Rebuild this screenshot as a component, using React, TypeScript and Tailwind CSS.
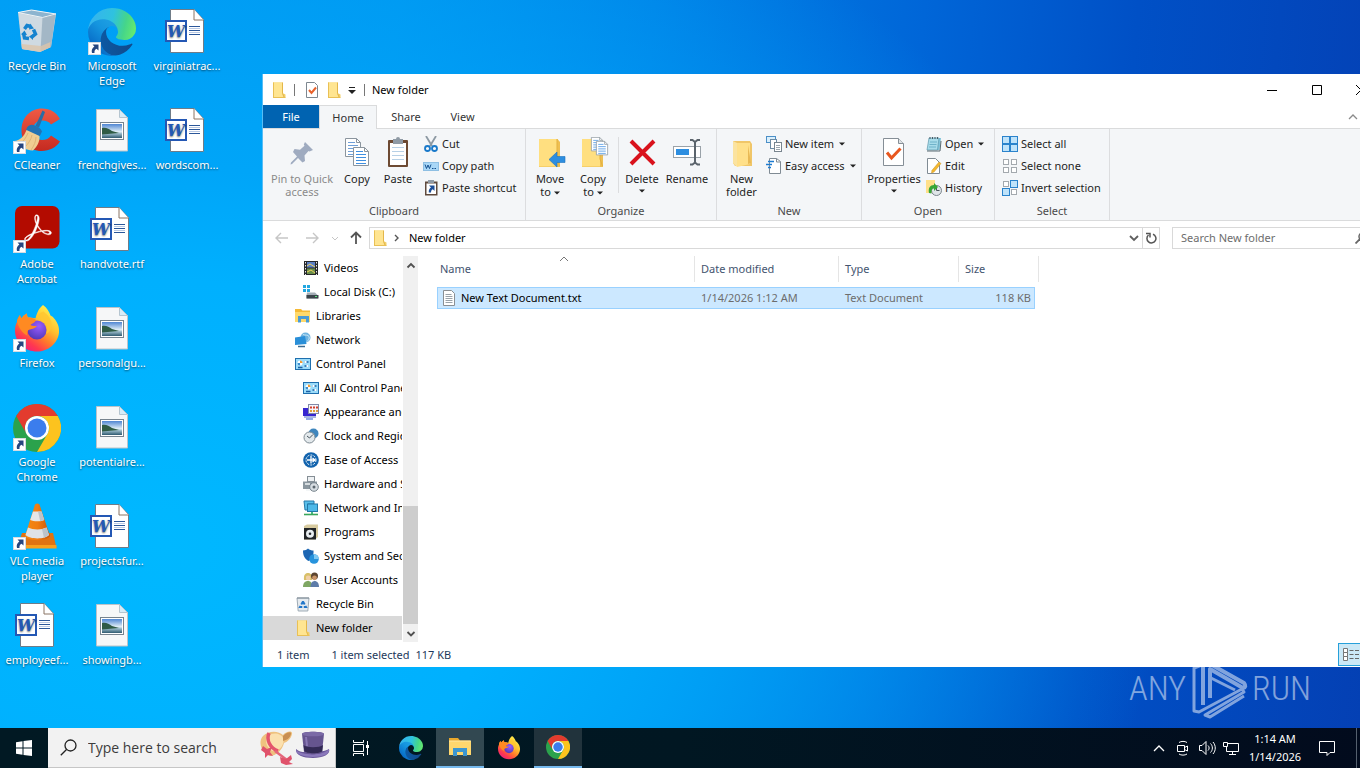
import type { ReactNode } from "react";

/* ---------- desktop icons (48 x 48) ---------- */

function ShortcutMark() {
  return (
    <g>
      <rect x="0.5" y="34.5" width="12" height="12" fill="#fff" stroke="#d5dbe2" />
      <path d="M4.500 36.500h6v6l-2-1.800c-1.800 1-2.200 2.300-2 4.300H4c-.8-3 .2-5 2.400-6.500z" fill="#26457f" />
    </g>
  );
}

function Svg48({ children }: { children: ReactNode }) {
  return (
    <svg viewBox="0 0 48 48" className="size-12" aria-hidden="true">
      {children}
    </svg>
  );
}

function EdgeArt() {
  return (
    <>
      <defs>
        <linearGradient id="edgeA" x1="63" y1="177" x2="241" y2="177" gradientUnits="userSpaceOnUse">
          <stop offset="0" stopColor="#0c59a4" />
          <stop offset="1" stopColor="#114a8b" />
        </linearGradient>
        <linearGradient id="edgeB" x1="157" y1="120" x2="46" y2="240" gradientUnits="userSpaceOnUse">
          <stop offset="0" stopColor="#1b9de2" />
          <stop offset=".3" stopColor="#1595df" />
          <stop offset="1" stopColor="#0667c4" />
        </linearGradient>
        <linearGradient id="edgeC" x1="20" y1="60" x2="260" y2="120" gradientUnits="userSpaceOnUse">
          <stop offset="0" stopColor="#35b4ee" />
          <stop offset=".45" stopColor="#2fc2df" />
          <stop offset=".75" stopColor="#45d58a" />
          <stop offset="1" stopColor="#66eb6e" />
        </linearGradient>
      </defs>
      <g transform="translate(-4.630 -4.920)">
        <path fill="url(#edgeA)" d="M235.680 195.460a93.730 93.730 0 0 1-10.540 4.710 101.870 101.870 0 0 1-35.900 6.460c-47.320 0-88.540-32.550-88.540-74.320A31.480 31.480 0 0 1 117.130 105c-42.800 1.800-53.800 46.400-53.800 72.530 0 73.880 68.090 81.370 82.760 81.370 7.910 0 19.840-2.300 27-4.560l1.310-.44a128.340 128.340 0 0 0 66.600-52.800 4 4 0 0 0-5.320-5.640z" />
        <path fill="url(#edgeB)" d="M110.340 246.340A79.200 79.200 0 0 1 87.600 225a80.720 80.720 0 0 1 29.530-120c3.120-1.470 8.450-4.130 15.540-4a32.350 32.350 0 0 1 25.690 13 31.880 31.880 0 0 1 6.360 18.660c0-.21 24.460-79.600-80-79.600-43.900 0-80 41.660-80 78.210a130.150 130.150 0 0 0 12.110 56 128 128 0 0 0 156.380 67.110 75.550 75.550 0 0 1-62.780-8z" />
        <path fill="url(#edgeC)" d="M156.940 153.780c-.81 1.050-3.300 2.500-3.300 5.660 0 2.610 1.700 5.120 4.720 7.230 14.380 10 41.490 8.680 41.560 8.680a59.560 59.560 0 0 0 30.270-8.350A61.380 61.380 0 0 0 260.620 114c.26-22.410-8-37.310-11.340-43.910C228.090 28.760 182.350 5 132.620 5a128 128 0 0 0-128 126.200c.48-36.540 36.800-66.050 80-66.050 3.500 0 23.460.34 42 10.070 16.340 8.580 24.900 18.940 30.850 29.210 6.180 10.670 7.280 24.150 7.280 29.520s-2.740 13.330-7.800 19.830z" />
      </g>
    </>
  );
}

function ChromeArt() {
  return (
    <>
      <circle cx="24" cy="24" r="24" fill="#2ba24c" />
      <path d="M3.200 12A24 24 0 0 1 44.800 12H24A12 12 0 0 0 13.600 30z" fill="#e33b2e" />
      <path d="M44.800 12A24 24 0 0 1 24 48L34.400 30A12 12 0 0 0 24 12z" fill="#fcc31e" />
      <circle cx="24" cy="24" r="12" fill="#fff" />
      <circle cx="24" cy="24" r="9.500" fill="#3b7ded" />
    </>
  );
}

function FirefoxArt() {
  return (
    <>
      <defs>
        <linearGradient id="ffA" x1="40" y1="4" x2="10" y2="44" gradientUnits="userSpaceOnUse">
          <stop offset="0" stopColor="#fff14f" />
          <stop offset=".35" stopColor="#ffc02e" />
          <stop offset=".6" stopColor="#ff7a2b" />
          <stop offset=".82" stopColor="#ff3850" />
          <stop offset="1" stopColor="#f0207a" />
        </linearGradient>
        <radialGradient id="ffB" cx=".6" cy=".3" r=".8">
          <stop offset="0" stopColor="#9a5cff" />
          <stop offset="1" stopColor="#4a35b0" />
        </radialGradient>
      </defs>
      <path d="M30 0c4 2.500 6.300 7 7.500 10.500 1.200.6 2.300 1 3.200 2.500C44.500 17 46.500 22 46 27.500 45 38.500 35 46.500 24 46.500 12 46.500 2 38 2 25.500c0-3.800.8-6 2-8.500 0-2 1.300-5 3-7 .2 1.500.8 2.500 1.500 3.200C9.700 11.500 11.500 9.600 14 8.500c-.2 1.700.3 3.200 1 4 2.300.1 5 .2 7.500.8 1-3 2-9 7.500-13.300z" fill="url(#ffA)" />
      <circle cx="24" cy="25" r="9.500" fill="url(#ffB)" />
      <path d="M4 17c0-2 1.300-5 3-7 .2 1.500.8 2.500 1.500 3.200C9.700 11.500 11.500 9.600 14 8.500c-.2 1.700.3 3.200 1 4 2.500 0 6 .5 8 2.500-1 3-4 3.500-5.500 5 1.500 1 4.500 1.200 6.500 1-2 2.500-4.500 3-7 3.500-2.700.7-3.800 3-2.500 6C9 28 6 23 4 17z" fill="#ff8a22" />
      <path d="M23.500 13.500C27 12 31 14 33 18c1.500 3.500 1.500 8 0 11 3.500-1.500 5.500-5 5.500-9.500 0-6-4-10-8-13-4 1-5 3.500-7 7z" fill="#ffc531" opacity=".8" />
    </>
  );
}

function RecycleBinArt() {
  return (
    <Svg48>
      <path d="M5 4.500 18.500 2 43 6 38 39 27 44 9 41z" fill="#c9d4dc" />
      <path d="M5 4.500 18.500 2 43 6 29.500 9.500z" fill="#8db4cf" stroke="#eef3f6" />
      <path d="M6 5.500 29 10 27.500 43.500 9 41z" fill="#cfdae2" />
      <path d="M29.500 10 42.500 6.500 38 39 27.500 43.500z" fill="#a3b7c6" />
      <path d="M8.500 36 28 38l9.500-4L37 39.500 27 44 9 41z" fill="#dcc4aa" opacity=".8" />
      <g fill="none" stroke="#1583cf" strokeWidth="3.500">
        <path d="M11.500 21 14 17.500l4 1" />
        <path d="M20.500 21.500 22.500 26l-3.500 3" />
        <path d="M16 30.500 11.500 30 10.500 25" />
      </g>
      <path d="M17 15.500l4 5-5 1zM20 26v6l-4-3.500zM8 26.500l3.500-4 2.500 4.500z" fill="#1583cf" />
    </Svg48>
  );
}

function CCleanerArt() {
  return (
    <Svg48>
      <defs>
        <linearGradient id="ccR" x1="0" y1="0" x2="0" y2="1">
          <stop offset="0" stopColor="#ef5a45" />
          <stop offset="1" stopColor="#c52a20" />
        </linearGradient>
      </defs>
      <path d="M47 12 38 17.500C36 14.500 33 13.500 29.500 13.500 23 13.500 19.500 18.500 19.500 23.500c0 6 4.500 9.500 9.500 9.500 4 0 7-1.500 9-4.500l9 6C43 40.500 36.500 44 28.500 44 16 44 8.500 35 8.500 23.500 8.500 11 17 1.500 29 1.500c8 0 14.500 4 18 10.500z" fill="url(#ccR)" />
      <path d="M29.500 3.500 32 5 26 20.500l-3.500-1.500z" fill="#2a6da5" />
      <path d="M14 20.500c2-3 5-3.500 8-2 3.500 1.500 6 3 7 6l-2.500 5-13.500-6z" fill="#2273b4" />
      <path d="M13.500 23 26.500 29c.5 5.500-2.500 11-6.500 14.500C12 43 4.500 39.500 1 34c6-.5 10-4.500 12.500-11z" fill="#f0cd92" />
      <path d="M15 26c-2 5-5 9-9 11M19 28c-1 5-4 9-7 12M23 30c0 4-2 9-5 13" stroke="#dfb477" fill="none" />
      <ShortcutMark />
    </Svg48>
  );
}

function AcrobatArt() {
  return (
    <Svg48>
      <rect x="2" y="0" width="44.500" height="42.500" rx="7" fill="#b30b00" />
      <g transform="translate(11.500 8.500) scale(1.120)">
        <path stroke="#fff" strokeWidth=".4" fill="#fff" d="M23.630 15.300c-.71-.745-2.166-1.170-4.224-1.170-1.100 0-2.377.106-3.761.354a19.443 19.443 0 0 1-2.307-2.661c-.532-.71-.994-1.490-1.420-2.236.817-2.484 1.207-4.507 1.207-5.962 0-1.632-.603-3.336-2.342-3.336-.532 0-1.065.32-1.349.781-.78 1.384-.425 4.400.923 7.381a60.277 60.277 0 0 1-1.703 4.507c-.568 1.349-1.207 2.733-1.917 4.010C2.834 18.530.314 20.340.03 21.758c-.106.533.071 1.030.462 1.420.142.107.639.533 1.490.533 2.590 0 5.323-4.188 6.707-6.707 1.065-.355 2.130-.71 3.194-.994a34.963 34.963 0 0 1 3.407-.745c2.732 2.448 5.145 2.839 6.352 2.839 1.490 0 2.023-.604 2.200-1.100.32-.64.106-1.349-.213-1.704zm-1.420 1.030c-.107.532-.64.887-1.384.887-.213 0-.39-.036-.604-.071-1.348-.32-2.626-.994-3.903-2.059a17.717 17.717 0 0 1 2.980-.248c.746 0 1.385.035 1.810.142.497.106 1.278.426 1.100 1.348zm-7.524-1.668a38.010 38.010 0 0 0-2.945.674 39.680 39.680 0 0 0-2.520.745 40.050 40.050 0 0 0 1.207-2.555c.426-.994.78-2.023 1.136-2.981.354.603.745 1.207 1.135 1.739a50.127 50.127 0 0 0 1.987 2.378zM10.038 1.460a.768.768 0 0 1 .674-.425c.745 0 .887.851.887 1.526 0 1.135-.355 2.874-.958 4.861-1.030-2.768-1.100-5.074-.603-5.962zM6.134 17.997c-1.810 2.981-3.549 4.826-4.613 4.826a.872.872 0 0 1-.532-.177c-.213-.213-.32-.461-.249-.745.213-1.065 2.271-2.555 5.394-3.904z" />
      </g>
      <ShortcutMark />
    </Svg48>
  );
}

function VlcArt() {
  return (
    <Svg48>
      <defs>
        <linearGradient id="vlcO" x1="0" y1="0" x2="1" y2="0">
          <stop offset="0" stopColor="#f58a12" />
          <stop offset=".5" stopColor="#f07d12" />
          <stop offset="1" stopColor="#c9560a" />
        </linearGradient>
      </defs>
      <path d="M9 30h31l3.500 15H4z" fill="#e07312" />
      <path d="M4 42h39.500v3.500H4z" fill="#f9a01c" />
      <path d="M22 1.500q2.200-2 4.500 0L37 33C34 38.500 15 38.500 12 33z" fill="url(#vlcO)" />
      <path d="M20 8.500h8.500l2.700 8.500c-3 1.700-10.500 1.700-14 0z" fill="#e4e6e8" />
      <path d="M15 24.500c5 2.500 14 2.500 18.500 0l2.500 7.500c-4 4.500-19 4.500-23.500 0z" fill="#dfe2e5" />
      <path d="M25 8.500h3.500l2.700 8.500-4 1.200zM29 26l4.500-1.500L36 32l-5 3z" fill="#bcc3ca" />
      <ShortcutMark />
    </Svg48>
  );
}

function WordDocArt() {
  return (
    <Svg48>
      <path d="M7.500 1.500h23.500l9.500 10v33h-33z" fill="#fff" stroke="#6f7c88" />
      <path d="M31 1.500v10.500h9.500" fill="#fff" stroke="#8a7464" />
      <path d="M26 18.500h11M26 22.500h11M26 26.500h11" stroke="#2b579a" />
      <path d="M26 20.500h11M26 24.500h11" stroke="#b9c9e4" />
      <rect x="3" y="13" width="20" height="20" fill="#fff" stroke="#2458b4" strokeWidth="2" />
      <text x="13" y="28.500" textAnchor="middle" fontSize="16" fontWeight="700" fontStyle="italic" fontFamily="DejaVu Serif, serif" fill="#2458b4">
        W
      </text>
    </Svg48>
  );
}

function PictureFileArt() {
  return (
    <Svg48>
      <defs>
        <linearGradient id="picSky" x1="0" y1="0" x2="0" y2="1">
          <stop offset="0" stopColor="#4f86d3" />
          <stop offset=".55" stopColor="#e0eef6" />
          <stop offset=".68" stopColor="#9cbccb" />
          <stop offset="1" stopColor="#2f5a70" />
        </linearGradient>
      </defs>
      <path d="M8.500 2.500h23l8 8v33.500h-31z" fill="#f6f7f8" stroke="#bcc3c9" />
      <path d="M31.500 2.500v8h8z" fill="#d6ecf8" stroke="#b5c5d0" />
      <rect x="12.500" y="15.500" width="23" height="17" fill="#fff" stroke="#77838e" />
      <rect x="14" y="17" width="20" height="14" fill="url(#picSky)" />
      <path d="M14 21c4-1 7 1 10 3l7 2-17 1.500z" fill="#2f5b45" />
    </Svg48>
  );
}

const desktopItems: { label: string; icon: ReactNode }[] = [
  { label: "Recycle Bin", icon: <RecycleBinArt /> },
  { label: "CCleaner", icon: <CCleanerArt /> },
  { label: "Adobe Acrobat", icon: <AcrobatArt /> },
  { label: "Firefox", icon: <Svg48><FirefoxArt /><ShortcutMark /></Svg48> },
  { label: "Google Chrome", icon: <Svg48><ChromeArt /><ShortcutMark /></Svg48> },
  { label: "VLC media player", icon: <VlcArt /> },
  { label: "employeef...", icon: <WordDocArt /> },
  { label: "Microsoft Edge", icon: <Svg48><g transform="scale(.1875)"><EdgeArt /></g><ShortcutMark /></Svg48> },
  { label: "frenchgives...", icon: <PictureFileArt /> },
  { label: "handvote.rtf", icon: <WordDocArt /> },
  { label: "personalgu...", icon: <PictureFileArt /> },
  { label: "potentialre...", icon: <PictureFileArt /> },
  { label: "projectsfur...", icon: <WordDocArt /> },
  { label: "showingb...", icon: <PictureFileArt /> },
  { label: "virginiatrac...", icon: <WordDocArt /> },
  { label: "wordscom...", icon: <WordDocArt /> },
];

/* ---------- small icons (16 x 16) ---------- */

function Svg16({ children }: { children: ReactNode }) {
  return (
    <svg viewBox="0 0 16 16" className="size-4 shrink-0" aria-hidden="true">
      {children}
    </svg>
  );
}

function FolderArt() {
  return (
    <Svg16>
      <path d="M2 .5h9.500v10.500l3 1.500v3H2z" fill="#f3cf66" />
      <path d="M2 .5h9.500v11l1.500 3.500H2z" fill="#ffe591" />
      <path d="M11.500 .5v11l1.500 3.500" stroke="#e3b64a" fill="none" />
      <path d="M2.500.5v15M2 15.500h12.500" stroke="#e9c055" />
    </Svg16>
  );
}

function CheckDocSmall() {
  return (
    <Svg16>
      <path d="M2.500.5h8l3 3v12h-11z" fill="#fff" stroke="#7d8790" />
      <path d="M5 8l2.500 3L12 5.500" stroke="#e8622c" strokeWidth="2" fill="none" />
    </Svg16>
  );
}

const panelArt = (
  <Svg16>
    <rect x=".5" y="2.500" width="15" height="11" fill="#9bdcfa" stroke="#1f6fae" />
    <circle cx="5" cy="7" r="2.500" fill="#fff" />
    <path d="M5 7V4.500A2.500 2.500 0 0 1 7.500 7z" fill="#f29a2e" />
    <path d="M2.500 7A2.500 2.500 0 0 0 5 9.500V7z" fill="#3b8fd0" />
    <path d="M3 11.500h4.500M9.500 6h4M9.500 10h4" stroke="#1b5fa5" strokeWidth="1.500" />
    <rect x="9.500" y="5" width="2" height="2" fill="#fff" />
    <rect x="11.500" y="9" width="2" height="2" fill="#fff" />
  </Svg16>
);

const treeItems: { label: string; deep: boolean; icon: ReactNode; active?: boolean }[] = [
  {
    label: "Videos", deep: true,
    icon: (
      <Svg16>
        <rect x="1" y="1" width="14" height="14" fill="#26282b" />
        <rect x="4" y="2" width="8" height="5.500" fill="#5b7fc4" />
        <rect x="4" y="8.500" width="8" height="5.500" fill="#6a8f4b" />
        <path d="M4 6l3-2 5 3M4 12l4-2 4 3" stroke="#f0d25c" fill="none" />
        <path d="M2.500 2v13M13.500 2v13" stroke="#e8e8e8" strokeDasharray="1.500 1.500" />
      </Svg16>
    ),
  },
  {
    label: "Local Disk (C:)", deep: true,
    icon: (
      <Svg16>
        <path d="M0 1h3v3H0zM4 1h3v3H4zM0 5h3v3H0zM4 5h3v3H4z" fill="#22a7e0" />
        <path d="M4 8.500h8l3 3v3H3.500v-3z" fill="#a3adb5" />
        <path d="M3.500 11h12v3.500h-12z" fill="#3b444b" />
        <path d="M12 12.500h2" stroke="#5be07b" />
      </Svg16>
    ),
  },
  {
    label: "Libraries", deep: false,
    icon: (
      <Svg16>
        <path d="M0 1h6l1.500 1.500H15V14H0z" fill="#f5b935" />
        <path d="M0 4h15V14H0z" fill="#ffd96a" />
        <path d="M3 8h11v6.500h-3V11H6v3.500H3z" fill="#4a9bd4" />
      </Svg16>
    ),
  },
  {
    label: "Network", deep: false,
    icon: (
      <Svg16>
        <circle cx="10.500" cy="5.500" r="5" fill="#6fb3df" />
        <path d="M8 2.500c2 1 5 0 6 2s-1 4-2 5" stroke="#c9e7f7" fill="none" />
        <path d="M0 5.500l10-1.500 1.500 8L0 13z" fill="#2a8fd8" />
        <path d="M3 14.500h7" stroke="#3c6c92" strokeWidth="1.500" />
      </Svg16>
    ),
  },
  { label: "Control Panel", deep: false, icon: panelArt },
  { label: "All Control Panel Items", deep: true, icon: panelArt },
  {
    label: "Appearance and Personalization", deep: true,
    icon: (
      <Svg16>
        <rect x="0" y="4" width="13" height="8" fill="#3726d0" />
        <path d="M3 15h7" stroke="#6f8fe0" strokeWidth="1.500" />
        <rect x="5.500" y=".5" width="10" height="9" fill="#f4f4fb" stroke="#8289a8" />
        <path d="M7 3.500h2M10 3.500h2M13 3.500h2" stroke="#d2402c" strokeWidth="2" />
        <path d="M7 7h2M10 7h2M13 7h2" stroke="#e0a13a" strokeWidth="2" />
        <path d="M1 13h12" stroke="#8d9fd8" strokeWidth="1.500" />
      </Svg16>
    ),
  },
  {
    label: "Clock and Region", deep: true,
    icon: (
      <Svg16>
        <circle cx="10.500" cy="5.500" r="5" fill="#3f86bd" />
        <circle cx="6.500" cy="9.500" r="5.500" fill="#e3e9ec" stroke="#7f8b93" />
        <path d="M4 8l2.500 2L10 6.500" stroke="#47545e" fill="none" />
      </Svg16>
    ),
  },
  {
    label: "Ease of Access", deep: true,
    icon: (
      <Svg16>
        <circle cx="8" cy="8" r="7.800" fill="#1364ae" />
        <circle cx="8" cy="8" r="5" fill="none" stroke="#fff" strokeDasharray="2 1.200" />
        <path d="M4 8h7.500M8 4v7.500M9.500 6l2.500 2-2.500 2" stroke="#fff" strokeWidth="1.300" fill="none" />
      </Svg16>
    ),
  },
  {
    label: "Hardware and Sound", deep: true,
    icon: (
      <Svg16>
        <rect x="4.500" y=".5" width="7" height="5" fill="#eef1f3" stroke="#858e95" />
        <path d="M0 5.500h14V13H0z" fill="#8b979f" />
        <path d="M2 8h5M3 14h5" stroke="#f0f3f5" strokeWidth="1.500" />
        <circle cx="11" cy="11" r="4.300" fill="#d7dde2" stroke="#76828b" />
        <circle cx="11" cy="11" r="1.500" fill="#5d6870" />
      </Svg16>
    ),
  },
  {
    label: "Network and Internet", deep: true,
    icon: (
      <Svg16>
        <path d="M1 1h10v3H5v6H2z" fill="#58bfea" stroke="#277bab" />
        <rect x="4.500" y="4" width="10" height="7.500" fill="#4db8e8" stroke="#2377a8" />
        <path d="M9 12v2" stroke="#4b8" strokeWidth="2" />
        <path d="M1 14.500h14" stroke="#3aa65a" strokeWidth="1.600" />
      </Svg16>
    ),
  },
  {
    label: "Programs", deep: true,
    icon: (
      <Svg16>
        <path d="M1 2l3-1.500h11V13l-3 2.500H1z" fill="#d8cba0" />
        <rect x="1" y="4" width="12" height="11.500" fill="#202326" />
        <circle cx="7" cy="9.800" r="4" fill="#e9eef1" />
        <circle cx="7" cy="9.800" r="1.300" fill="#26292c" />
      </Svg16>
    ),
  },
  {
    label: "System and Security", deep: true,
    icon: (
      <Svg16>
        <path d="M0 2.500c2 0 4-1 5-2 1.500 1.500 3.500 2 5.500 2C11 8 8 12 5.500 13 2 11 0 8 0 2.500z" fill="#1c66b3" />
        <circle cx="11" cy="11" r="4.800" fill="#2793dc" />
        <path d="M11 11V6.200A4.800 4.800 0 0 1 15.800 11z" fill="#7fc9f3" />
      </Svg16>
    ),
  },
  {
    label: "User Accounts", deep: true,
    icon: (
      <Svg16>
        <path d="M1 8c-.5-5 1-7 4-7s4.500 2 4 7z" fill="#d9c069" />
        <circle cx="5.200" cy="6" r="2.400" fill="#f1cfa8" />
        <path d="M0 15c0-4 2-6 5-6s4 2 4 6z" fill="#7fa763" />
        <circle cx="11.500" cy="4" r="3.500" fill="#5b4430" />
        <circle cx="11.500" cy="5.800" r="2.400" fill="#c99468" />
        <path d="M7.500 15c0-4 1.500-6 4-6s4.500 2 4.500 6z" fill="#5d7ba8" />
      </Svg16>
    ),
  },
  {
    label: "Recycle Bin", deep: false,
    icon: (
      <Svg16>
        <path d="M2 2h12l-1.200 13H3.200z" fill="#e6ebef" stroke="#9fabb5" />
        <path d="M2 2h12" stroke="#7c8993" />
        <path d="M8 5.500l3 5.500H5z" fill="none" stroke="#2477c9" strokeWidth="2" strokeDasharray="3.500 1.500" />
      </Svg16>
    ),
  },
  { label: "New folder", deep: false, icon: <FolderArt />, active: true },
];

/* ---------- ribbon pieces ---------- */

function Caret() {
  return <svg viewBox="0 0 6 4" className="inline-block h-1 w-1.5 shrink-0 align-middle" aria-hidden="true"><path d="M0 .5h6L3 3.500z" fill="#222" /></svg>;
}

function BigButton({ icon, lines, caret, width, muted }: { icon: ReactNode; lines: string[]; caret?: "inline" | "below"; width: string; muted?: boolean }) {
  return (
    <button className={`flex shrink-0 flex-col items-center pt-2 ${width} ${muted ? "text-[#8a8a8a]" : "text-[#1e1e1e]"}`}>
      <svg viewBox="0 0 32 32" className="size-8 shrink-0" aria-hidden="true">{icon}</svg>
      <span className="mt-[3px] block whitespace-nowrap text-center leading-[13px]">
        {lines.map((line, i) => (
          <span key={line} className="block">
            {line}
            {caret === "inline" && i === lines.length - 1 && <> <Caret /></>}
          </span>
        ))}
        {caret === "below" && <span className="flex h-2 items-end justify-center"><Caret /></span>}
      </span>
    </button>
  );
}

function SmallButton({ icon, label, caret }: { icon: ReactNode; label: string; caret?: boolean }) {
  return (
    <button className="flex h-[22px] items-center gap-[3px] whitespace-nowrap text-[#1e1e1e]">
      <Svg16>{icon}</Svg16>
      <span>{label}</span>
      {caret && <span className="ml-0.5 flex"><Caret /></span>}
    </button>
  );
}

function Group({ title, width, children }: { title: string; width: string; children: ReactNode }) {
  return (
    <section aria-label={title} className={`flex shrink-0 flex-col border-r border-[#dcdddf] ${width}`}>
      <div className="flex h-[73px] items-start">{children}</div>
      <div className="text-center leading-[18px] text-[#4a4a4a]">{title}</div>
    </section>
  );
}

const pinIcon = (
  <path d="M19 4l8 8-3.500 1.500-1-.5-4 4.500.5 5.500-2.500 1.500-4.500-4.500-6 6-1.500.5.5-2 6-6-4-4.500L8.500 11l5.500.8 4.500-4-.7-1.300z" transform="translate(0 1)" fill="#9fabc0" />
);

function Sheet({ x, y, color }: { x: number; y: number; color: string }) {
  return (
    <g transform={`translate(${x} ${y})`}>
      <path d="M.5.5h11l4 4v14h-15z" fill="#fff" stroke="#8b959e" />
      <path d="M11.500.5v4h4" fill="none" stroke="#8b959e" />
      <path d="M3 4.500h7M3 7.500h10M3 10.500h10M3 13.500h10M3 16.500h10" stroke={color} />
    </g>
  );
}

const copyIcon = (
  <>
    <Sheet x={4} y={1} color="#6f9fd8" />
    <Sheet x={12} y={10} color="#3f8fe0" />
  </>
);

const pasteIcon = (
  <>
    <rect x="6" y="3" width="20" height="27" rx="1" fill="#6d4a33" />
    <rect x="8" y="6" width="16" height="22" fill="#fff" />
    <path d="M10 10.500h12M10 14.500h12M10 18.500h12M10 22.500h12" stroke="#b7d0e6" />
    <path d="M11 2h3a2 2 0 0 1 4 0h3v5H11z" fill="#8f9aa5" />
  </>
);

const bigFolder = (
  <>
    <path d="M5 2h18.500l2.500 3v25H5z" fill="#eebf52" />
    <path d="M5 2h18v27.500H5z" fill="#ffdf80" />
    <path d="M23 2v20l2.500 7" stroke="#e3b13f" fill="none" />
  </>
);

const moveIcon = (
  <>
    {bigFolder}
    <path d="M31 19.500v6h-8v4.500L15 22.500l8-7.500v4.500z" fill="#2d8ee0" stroke="#1b72bd" strokeWidth=".6" />
  </>
);

const copyToIcon = (
  <>
    {bigFolder}
    <g transform="translate(14 0) scale(.75)"><Sheet x={0} y={0} color="#3f8fe0" /></g>
    <g transform="translate(19 4) scale(.75)"><Sheet x={0} y={0} color="#3f8fe0" /></g>
  </>
);

const deleteIcon = <path d="M5 4l23 23M28 4L5 27" stroke="#d9121c" strokeWidth="4" />;

const renameIcon = (
  <>
    <rect x="2.500" y="9.500" width="27" height="11" fill="#fff" stroke="#9aa2a9" />
    <rect x="5" y="12" width="13" height="6" fill="#2d8ee0" />
    <path d="M19 3h2.500L24 5l2.500-2H29M19 27.500h2.500l2.500-2 2.500 2H29M24 5v21" stroke="#5b646c" strokeWidth="2" fill="none" />
  </>
);

const newFolderIcon = (
  <>
    <path d="M7 4h17l2 3v22H9l-2-3z" fill="#f0c669" />
    <path d="M7 4l4 2v24l-4-4z" fill="#fbe3a0" />
    <path d="M11 6h13v21l-13 3z" fill="#ffe08a" />
    <path d="M22 8l3 18-3 1z" fill="#e9b955" />
  </>
);

const propertiesIcon = (
  <>
    <path d="M5.500 1.500h15l5 5v22h-20z" fill="#fff" stroke="#858e96" />
    <path d="M20.500 1.500v5h5" fill="#dfe3e6" stroke="#858e96" />
    <path d="M9 15.500l4.500 5.500 9-9.500" stroke="#e8571f" strokeWidth="3" fill="none" />
  </>
);

const cutIcon = (
  <>
    <path d="M3 0l6 10M13 0L7 10" stroke="#8d99a3" strokeWidth="1.800" />
    <circle cx="4.500" cy="12.500" r="2.500" fill="none" stroke="#1979ca" strokeWidth="1.800" />
    <circle cx="11.500" cy="12.500" r="2.500" fill="none" stroke="#1979ca" strokeWidth="1.800" />
  </>
);

const copyPathIcon = (
  <>
    <rect x=".5" y="4.500" width="15" height="8" fill="#a9d7f7" stroke="#8ebfe3" />
    <path d="M2 6.500l1.500 4L5 7l1.500 3.500L8 6.500M9 10.500h1.500M11.500 10.500H13" stroke="#14508f" fill="none" />
  </>
);

const pasteShortcutIcon = (
  <>
    <rect x="2" y="1.500" width="12.500" height="14" fill="#5f4a3d" />
    <rect x="3.500" y="3.500" width="9.500" height="10.500" fill="#fff" />
    <rect x="5" y="0" width="6" height="3" fill="#8f9aa5" />
    <path d="M6 5.500h5.500V11L9.800 9.300C8.500 10 8 11 8 12.500H5.800c-.3-2.500.7-4 2.200-5z" fill="#1d4f98" />
  </>
);

const newItemIcon = (
  <>
    <rect x=".5" y=".5" width="9" height="6" fill="#d9effc" stroke="#4b8fc7" />
    <rect x="4.500" y="3.500" width="6" height="9" fill="#fff" stroke="#6d8ba3" />
    <rect x="8.500" y="6.500" width="7" height="9" fill="#fff" stroke="#79858f" />
    <path d="M10 9.500h4M10 11.500h4M10 13.500h4" stroke="#9ba6ae" />
  </>
);

const easyIcon = (
  <>
    <path d="M3.500.5h7l4 3v12h-11z" fill="#fff" stroke="#808b94" />
    <path d="M10.500.5v3.500h4" fill="none" stroke="#808b94" />
    <path d="M2 3.500h6M0 6.500h6M2 9.500h3" stroke="#1d7bd0" strokeWidth="1.500" />
  </>
);

const openIcon = (
  <>
    <path d="M4 2h11l-1.500 12H2z" fill="#7fc3d9" />
    <path d="M3 2h10l-1.500 12H1z" fill="#a8dcea" stroke="#5b97ab" strokeWidth=".7" />
    <path d="M4 1v2M6.500 1v2M9 1v2M11.500 1v2" stroke="#4a5c66" />
    <path d="M4 6h7M3.500 8.500h7M3 11h7" stroke="#6fb2c9" />
    <path d="M1 15h13l1-10" fill="none" stroke="#5a6a72" />
  </>
);

const editIcon = (
  <>
    <path d="M1.500.5h8l4 4v11h-12z" fill="#fff" stroke="#808b94" />
    <path d="M13 4l2 1.500L8 14l-2.500 1 .5-2.700z" fill="#f4b82f" stroke="#c99222" strokeWidth=".5" />
  </>
);

const historyIcon = (
  <>
    <path d="M0 0h9v13H0z" fill="#ffe08a" />
    <circle cx="10.500" cy="10.500" r="5" fill="#dfe4e8" stroke="#7a858d" />
    <path d="M10.500 7.500v3h3" stroke="#4b555d" fill="none" />
    <path d="M3 13c-1-5 1-8 5-8V3l4 4-4 4V8.500c-2 0-3 2-2.500 5z" fill="#37a637" />
  </>
);

function Cells({ on }: { on: boolean[] }) {
  const spots = [[0.5, 0.5], [8.5, 0.5], [0.5, 8.500], [8.5, 8.500]];
  return (
    <>
      {spots.map(([x, y], i) =>
        on[i] ? (
          <rect key={i} x={x} y={y} width="7" height="7" fill="#bfe3fa" stroke="#2a83cc" />
        ) : (
          <rect key={i} x={x + 1} y={y + 1} width="5" height="5" fill="#fff" stroke="#a3a9ae" />
        ),
      )}
    </>
  );
}

/* ---------- explorer window ---------- */

function Ribbon() {
  return (
    <div className="flex h-[93px] shrink-0 border-y border-[#dadbdc] bg-[#f4f6f8]">
      <Group title="Clipboard" width="w-[263px]">
        <BigButton icon={pinIcon} lines={["Pin to Quick", "access"]} width="w-[78px]" muted />
        <BigButton icon={copyIcon} lines={["Copy"]} width="w-[32px]" />
        <BigButton icon={pasteIcon} lines={["Paste"]} width="w-[50px]" />
        <div className="flex flex-col pt-1">
          <SmallButton icon={cutIcon} label="Cut" />
          <SmallButton icon={copyPathIcon} label="Copy path" />
          <SmallButton icon={pasteShortcutIcon} label="Paste shortcut" />
        </div>
      </Group>
      <Group title="Organize" width="w-[191px]">
        <BigButton icon={moveIcon} lines={["Move", "to"]} caret="inline" width="w-[48px]" />
        <BigButton icon={copyToIcon} lines={["Copy", "to"]} caret="inline" width="w-[38px]" />
        <div className="ml-1.5 mt-2 h-14 border-l border-[#dcdddf]" />
        <BigButton icon={deleteIcon} lines={["Delete"]} caret="below" width="w-[46px]" />
        <BigButton icon={renameIcon} lines={["Rename"]} width="w-[44px]" />
      </Group>
      <Group title="New" width="w-[145px]">
        <BigButton icon={newFolderIcon} lines={["New", "folder"]} width="w-[49px]" />
        <div className="flex flex-col pt-1">
          <SmallButton icon={newItemIcon} label="New item" caret />
          <SmallButton icon={easyIcon} label="Easy access" caret />
        </div>
      </Group>
      <Group title="Open" width="w-[133px]">
        <BigButton icon={propertiesIcon} lines={["Properties"]} caret="below" width="w-[64px]" />
        <div className="flex flex-col pt-1">
          <SmallButton icon={openIcon} label="Open" caret />
          <SmallButton icon={editIcon} label="Edit" />
          <SmallButton icon={historyIcon} label="History" />
        </div>
      </Group>
      <Group title="Select" width="w-[115px]">
        <div className="flex flex-col pl-[7px] pt-1">
          <SmallButton icon={<Cells on={[true, true, true, true]} />} label="Select all" />
          <SmallButton icon={<Cells on={[false, false, false, false]} />} label="Select none" />
          <SmallButton icon={<Cells on={[false, true, true, false]} />} label="Invert selection" />
        </div>
      </Group>
    </div>
  );
}

function AddressRow() {
  return (
    <div className="flex shrink-0 items-center pt-[6px]">
      <div className="flex w-[106px] items-center pl-[11px]">
        <button aria-label="Back" className="w-[30px]"><Svg16><path d="M2 8h12M7 3L2 8l5 5" stroke="#c6c6c6" strokeWidth="1.400" fill="none" /></Svg16></button>
        <button aria-label="Forward" className="w-[27px]"><Svg16><path d="M2 8h12M9 3l5 5-5 5" stroke="#c6c6c6" strokeWidth="1.400" fill="none" /></Svg16></button>
        <button aria-label="Recent locations" className="w-[17px]"><svg viewBox="0 0 8 16" className="h-4 w-2"><path d="M1 7l3 3 3-3" stroke="#c6c6c6" fill="none" /></svg></button>
        <button aria-label="Up"><Svg16><path d="M8 14V3M3 7.500l5-5 5 5" stroke="#555" strokeWidth="1.800" fill="none" /></Svg16></button>
      </div>
      <div className="flex h-[22px] flex-1 items-center border border-[#d9d9d9]">
        <span className="flex px-0.5"><FolderArt /></span>
        <svg viewBox="0 0 8 8" className="ml-[3px] size-2"><path d="M2 1l3 3-3 3" stroke="#555" strokeWidth="1.400" fill="none" /></svg>
        <span className="flex-1 pl-2">New folder</span>
        <button aria-label="Previous locations" className="flex w-4 justify-center"><svg viewBox="0 0 10 8" className="h-2 w-2.5"><path d="M1 2l4 4 4-4" stroke="#5f5f5f" strokeWidth="1.800" fill="none" /></svg></button>
        <button aria-label="Refresh" className="flex h-full w-[17px] items-center justify-center border-l border-[#d9d9d9]">
          <svg viewBox="0 0 12 12" className="size-3"><path d="M8 2.200A4.500 4.500 0 1 1 3.500 3M1 1.500h4v4" stroke="#555" strokeWidth="1.500" fill="none" /></svg>
        </button>
      </div>
      <label className="ml-3 flex h-[22px] w-[204px] items-center border border-[#d9d9d9] pl-2">
        <input aria-label="Search New folder" placeholder="Search New folder" className="min-w-0 flex-1 bg-transparent outline-none placeholder:text-[#6d6d6d]" />
        <svg viewBox="0 0 12 12" className="mr-2 size-3"><circle cx="7.500" cy="4.500" r="3.500" stroke="#666" strokeWidth="1.500" fill="none" /><path d="M5 7l-4.500 4.500" stroke="#666" strokeWidth="1.800" /></svg>
      </label>
    </div>
  );
}

function Sidebar() {
  return (
    <div className="flex w-[156px] shrink-0">
      <nav aria-label="Folders" className="flex w-[139px] flex-col overflow-hidden">
        {treeItems.map((item) => (
          <a
            key={item.label + String(item.deep)}
            href="#"
            className={`flex h-6 shrink-0 items-center gap-[5px] whitespace-nowrap ${item.deep ? "pl-10" : "pl-8"} ${item.active ? "bg-[#d9d9d9]" : ""}`}
          >
            {item.icon}
            {item.label}
          </a>
        ))}
      </nav>
      <div aria-hidden="true" className="ml-px flex w-[15px] flex-col items-center bg-[#f0f0f0]">
        <svg viewBox="0 0 10 18" className="h-[18px] w-2.5"><path d="M1.500 11.500L5 8l3.500 3.500" stroke="#505050" strokeWidth="1.800" fill="none" /></svg>
        <div className="mt-auto h-[118px] w-full bg-[#cdcdcd]" />
        <svg viewBox="0 0 10 18" className="h-[18px] w-2.5"><path d="M1.500 8L5 11.500 8.500 8" stroke="#505050" strokeWidth="1.800" fill="none" /></svg>
      </div>
    </div>
  );
}

function FileList() {
  return (
    <div className="relative flex-1 pl-[18px]">
      <svg viewBox="0 0 10 6" className="absolute left-[140px] top-0 h-1.5 w-2.5"><path d="M1 5l4-4 4 4" stroke="#777" fill="none" /></svg>
      <table className="w-[602px] table-fixed border-separate border-spacing-0">
        <colgroup>
          <col className="w-[258px]" />
          <col className="w-[144px]" />
          <col className="w-[120px]" />
          <col className="w-[76px]" />
          <col className="w-[4px]" />
        </colgroup>
        <thead>
          <tr className="h-[26px] text-left text-[#44546f]">
            <th className="border-r border-[#e5e5e5] pl-[3px] font-normal">Name</th>
            <th className="border-r border-[#e5e5e5] pl-[6px] font-normal">Date modified</th>
            <th className="border-r border-[#e5e5e5] pl-[6px] font-normal">Type</th>
            <th colSpan={2} className="border-r border-[#e5e5e5] pl-[6px] font-normal">Size</th>
          </tr>
        </thead>
        <tbody>
          <tr aria-hidden="true" className="h-[5px]"><td colSpan={5} /></tr>
          <tr className="h-[22px] text-[#6d6d6d]">
            <td className="border-y border-l border-[#99d1ff] bg-[#cce8ff] pl-[3px]">
              <span className="flex items-center gap-1 text-black">
                <Svg16>
                  <path d="M2.500.5h8l3 3v12h-11z" fill="#fff" stroke="#8b8f93" />
                  <path d="M4.500 4.500h6M4.500 6.500h7M4.500 8.500h7M4.500 10.500h7M4.500 12.500h7" stroke="#9aa2a9" />
                </Svg16>
                New Text Document.txt
              </span>
            </td>
            <td className="border-y border-[#99d1ff] bg-[#cce8ff] pl-[6px]">1/14/2026 1:12 AM</td>
            <td className="border-y border-[#99d1ff] bg-[#cce8ff] pl-[6px]">Text Document</td>
            <td className="border-y border-r border-[#99d1ff] bg-[#cce8ff] pr-[3px] text-right">118 KB</td>
            <td />
          </tr>
        </tbody>
      </table>
    </div>
  );
}

function ExplorerWindow() {
  return (
    <section aria-label="New folder" className="absolute -right-4 bottom-[61px] left-[262px] top-[74px] flex flex-col border-l border-[#56bdf5] bg-white text-[11px] leading-4 text-black">
      <header className="flex h-[31px] shrink-0 items-center pl-2">
        <FolderArt />
        <span className="mx-[7px] h-3 border-l border-[#777]" />
        <span className="ml-0.5 flex items-center gap-1.5"><CheckDocSmall /><FolderArt /></span>
        <svg viewBox="0 0 8 10" className="ml-1.5 h-2.5 w-2"><path d="M1 2.500h6" stroke="#222" /><path d="M0 5h8L4 9z" fill="#222" /></svg>
        <span className="ml-2 mr-[7px] h-3 border-l border-[#777]" />
        <h1>New folder</h1>
        <div className="ml-auto flex">
          <button aria-label="Minimize" className="flex w-[45px] justify-center"><svg viewBox="0 0 10 10" className="size-2.5"><path d="M0 5.500h10" stroke="#000" /></svg></button>
          <button aria-label="Maximize" className="flex w-[45px] justify-center"><svg viewBox="0 0 10 10" className="size-2.5"><path d="M.5.5h9v9h-9z" stroke="#000" fill="none" /></svg></button>
          <button aria-label="Close" className="flex w-[37px] justify-center"><svg viewBox="0 0 10 10" className="ml-1.5 size-2.5"><path d="M0 0l10 10M10 0L0 10" stroke="#000" /></svg></button>
        </div>
      </header>
      <div className="-mb-px flex h-6 shrink-0 items-stretch text-[#333]">
        <button className="w-14 bg-[#0063b1] text-white">File</button>
        <button className="relative w-[58px] border-x border-t border-[#dadbdc] bg-[#f4f6f8]">Home</button>
        <button className="w-[58px]">Share</button>
        <button className="w-[55px]">View</button>
        <button aria-label="Collapse ribbon" className="ml-auto mr-[18px] flex items-center"><svg viewBox="0 0 10 6" className="h-1.5 w-2.5"><path d="M1 5l4-4 4 4" stroke="#8a8a8a" strokeWidth="1.300" fill="none" /></svg></button>
      </div>
      <Ribbon />
      <AddressRow />
      <div className="flex min-h-0 flex-1 pt-[7px]">
        <Sidebar />
        <FileList />
      </div>
      <footer className="flex h-[25px] shrink-0 items-center pl-3.5 text-[#1e395b]">
        <span>1 item</span>
        <span className="ml-[22px]">1 item selected</span>
        <span className="ml-1.5">117 KB</span>
        <button aria-label="Details view" className="ml-auto mr-2 flex h-[23px] w-[30px] items-center border border-[#26a0da] bg-[#cbe8f6] pl-1">
          <svg viewBox="0 0 18 14" className="h-3.5 w-[18px]">
            <path d="M.5.5h4v4h-4zM.5 4.500h4v4h-4zM.5 8.500h4v4h-4z" fill="#fff" stroke="#777" />
            <path d="M6.500 2.500h4M6.500 6.500h4M6.500 10.500h4M12 2.500h4M12 6.500h4M12 10.500h4" stroke="#666" />
          </svg>
        </button>
      </footer>
    </section>
  );
}

/* ---------- watermark ---------- */

function Watermark() {
  return (
    <div className="absolute bottom-2 right-[49px] flex items-center font-['Roboto_Condensed','Open_Sans_Condensed','Noto_Sans_ExtraCondensed',Roboto,sans-serif] text-[34px] font-light leading-none text-white opacity-50">
      <span>ANY</span>
      <svg viewBox="0 0 58 64" className="mx-1 h-16 w-[58px]" fill="none" stroke="#fff" strokeWidth="4" strokeLinejoin="round" aria-hidden="true">
        <path d="M13 49V4L54 27q3 4-1 5L20 13v29" />
        <path d="M12 9L4 12v43l5 1L52 33l2 3-39 23 5 2 34-21" strokeWidth="3" />
        <path d="M21 22l24 12" strokeWidth="3" />
      </svg>
      <span>RUN</span>
    </div>
  );
}

/* ---------- taskbar ---------- */

function HatsArt() {
  return (
    <svg viewBox="0 0 72 36" className="h-9 w-[72px]" aria-hidden="true">
      <path d="M4 6C10 0 20 1 24 5c3-4 10-5 9-1-1 5-5 8-8 9-2 8-8 12-13 13C6 26-3 14 4 6z" fill="#efc27f" />
      <path d="M9 6c5-4 13-3 15 2s-2 12-8 13S4 12 9 6z" fill="#fbe0ae" />
      <path d="M24 6c3-4 9-5 8-2-1 4-4 6-8 7z" fill="#c98f52" />
      <path d="M10 3c-3 7 1 15 9 18" stroke="#e4556c" strokeWidth="3.500" fill="none" />
      <path d="M4 16l4 3 5-2-2 5 3 4-5-1-3 3v-5l-4-3z" fill="#e0526b" />
      <path d="M16 21l12 9" stroke="#e4667b" strokeWidth="2.500" />
      <path d="M21 27l6 2 5-4 1 4-3 3 4 2-7 1-5-2z" fill="#e0526b" />
      <path d="M37 19c4 4 8 3 17 3s14-2 16-3c2 5-6 9-16 9s-18-3-17-9z" fill="#6b599b" />
      <path d="M37 20c6 6 28 6 33-1 1 5-6 8-16 8s-17-3-17-7z" fill="#8b79bb" />
      <path d="M43 4c0-3 22-3 22 0l-2 18c-2 3-16 3-18 0z" fill="#66558f" />
      <path d="M44.500 15c3 3 16 3 19.500 0l-.7 6c-2 3-16 3-18 0z" fill="#332a55" />
      <ellipse cx="54" cy="4" rx="11" ry="2.300" fill="#7b6aa6" />
      <path d="M47 7l1 9" stroke="#8978b5" strokeWidth="2" />
    </svg>
  );
}

function Taskbar() {
  return (
    <footer className="flex h-10 shrink-0 items-stretch bg-linear-to-r from-[#011923] via-[#011722] to-[#020b1d] font-['Open_Sans','Noto_Sans',sans-serif] text-white">
      <button aria-label="Start" className="flex w-12 items-center justify-center">
        <svg viewBox="0 0 16 16" className="size-4" fill="#fff"><path d="M0 2.200L6.500 1.300V7.500H0zM7.500 1.100L16 0v7.500H7.500zM0 8.500h6.500v6.200L0 13.800zM7.500 8.500H16V16l-8.500-1.100z" /></svg>
      </button>
      <label className="flex w-72 items-center border-b border-r border-[#c6c6c6] bg-[#f2f2f2] pl-3">
        <svg viewBox="0 0 17 17" className="size-[17px] shrink-0" fill="none" stroke="#222" strokeWidth="1.300"><circle cx="10.500" cy="6.500" r="5.500" /><path d="M6.500 10.500L.8 16.200" /></svg>
        <input aria-label="Search" placeholder="Type here to search" className="ml-[11px] min-w-0 flex-1 bg-transparent text-[14px] outline-none placeholder:text-[#3c3c3c]" />
        <span className="mr-1"><HatsArt /></span>
      </label>
      <div className="flex gap-px">
        <button aria-label="Task view" className="flex w-[50px] items-center justify-center">
          <svg viewBox="0 0 16 16" className="size-4" fill="none" stroke="#fff"><path d="M.5 0v2.500h10V0M.5 16v-2.500h10V16M.5 4.500h10v7H.5zM14.500 1v14" /><path d="M13 5h3v3h-3z" fill="#fff" stroke="none" /></svg>
        </button>
        <button aria-label="Microsoft Edge" className="flex w-12 items-center justify-center"><svg viewBox="0 0 256 256" className="size-6"><EdgeArt /></svg></button>
        <button aria-label="File Explorer" className="flex w-12 items-center justify-center border-b-2 border-[#76b9ed] bg-[#324851]">
          <svg viewBox="0 0 24 24" className="size-6"><path d="M1 3h9l2 2.500h10V20H1z" fill="#e9a82c" /><path d="M1 6h22v14H1z" fill="#ffd76e" /><path d="M5 13h14v8h-4v-4H9v4H5z" fill="#3d96cf" /><path d="M1 6h22" stroke="#ffe9a6" /></svg>
        </button>
        <button aria-label="Firefox" className="flex w-12 items-center justify-center"><svg viewBox="0 0 48 48" className="size-6"><FirefoxArt /></svg></button>
        <button aria-label="Google Chrome" className="flex w-12 items-center justify-center border-b-2 border-[#76b9ed] bg-[#21333c]"><svg viewBox="0 0 48 48" className="size-6"><ChromeArt /></svg></button>
      </div>
      <div className="ml-auto flex items-center">
        <button aria-label="Show hidden icons" className="flex w-6 justify-center"><svg viewBox="0 0 12 8" className="h-2 w-3"><path d="M1 7l5-5 5 5" stroke="#fff" strokeWidth="1.300" fill="none" /></svg></button>
        <button aria-label="Meet now" className="flex w-6 justify-center"><svg viewBox="0 0 16 16" className="size-4" fill="none" stroke="#fff"><path d="M2.500 5.500h7v6h-7zM9.500 7.500l3-1.500v5l-3-1.500M4 2.500c2-1.500 6-1.500 8 0M4 14c2 1.500 6 1.500 8 0" /></svg></button>
        <button aria-label="Volume" className="flex w-6 justify-center"><svg viewBox="0 0 18 16" className="h-4 w-[18px]" fill="none" stroke="#fff"><path d="M1.500 5.500h2.500l4-4v13l-4-4H1.500zM10 5.500c1.500 1.500 1.500 3.500 0 5M12.500 3.500c2.500 2.500 2.500 6.500 0 9M15 2c3 3.500 3 8.500 0 12" /></svg></button>
        <button aria-label="Network" className="flex w-6 justify-center"><svg viewBox="0 0 16 16" className="size-4" fill="none" stroke="#fff"><path d="M5 3.500h10.500v8H3.500V7M.5 2.500h4v4h-4zM9.500 11.500v3M6 14.500h7" /></svg></button>
        <button className="flex w-[64px] flex-col items-center font-['Noto_Sans','Open_Sans',sans-serif] text-[11px] leading-[18px]"><span>1:14 AM</span><span>1/14/2026</span></button>
        <button aria-label="Notifications" className="flex w-[40px] justify-center"><svg viewBox="0 0 16 16" className="size-4" fill="none" stroke="#fff"><path d="M.5 1.500h15v11H11l-3 3v-3H.5z" /></svg></button>
        <button aria-label="Show desktop" className="ml-[9px] h-10 w-1 border-l border-[#55606e]" />
      </div>
    </footer>
  );
}

export default function App() {
  return (
    <div className="flex h-screen flex-col overflow-hidden font-['Noto_Sans','Open_Sans',sans-serif]">
      <main className="relative flex-1 overflow-hidden bg-[radial-gradient(ellipse_1000px_760px_at_12%_75%,#00b8ff_0%,#00b0fe_35%,#00a5f8_50%,transparent_100%),linear-gradient(95deg,#0098f2_0%,#0092ee_28%,#0080e6_46%,#0066d8_65%,#0050c6_80%,#0440b4_100%)]">
        <ul className="grid w-max grid-flow-col grid-cols-[74px_76px_74px] grid-rows-[repeat(7,99px)]">
          {desktopItems.map((item) => (
            <li key={item.label}>
              <button className="flex w-full flex-col items-center pt-2 text-[11px] leading-[15px] text-white [text-shadow:0_1px_2px_rgba(0,0,0,0.6)]">
                {item.icon}
                <span className="mt-0.5 block w-[72px] text-center">{item.label}</span>
              </button>
            </li>
          ))}
        </ul>
        <ExplorerWindow />
        <Watermark />
      </main>
      <Taskbar />
    </div>
  );
}
